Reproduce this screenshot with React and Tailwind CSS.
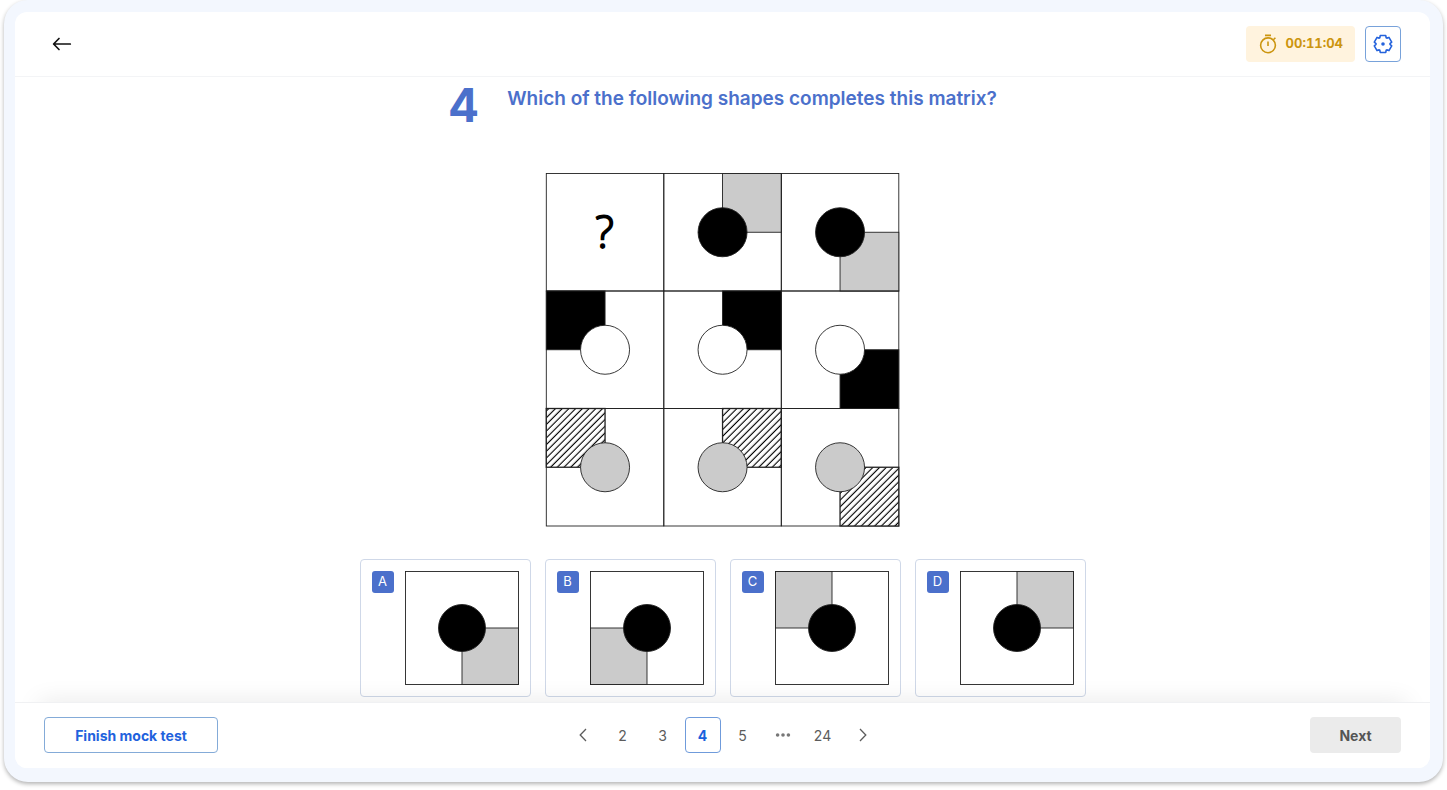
import React, { useState } from "react";

const FILLS = { black: "#000", grey: "#cbcbcb", white: "#fff", hatch: "url(#hatch)" };

const MATRIX = [
  [null, { corner: "tr", square: "grey", circle: "black" }, { corner: "br", square: "grey", circle: "black" }],
  [
    { corner: "tl", square: "black", circle: "white" },
    { corner: "tr", square: "black", circle: "white" },
    { corner: "br", square: "black", circle: "white" },
  ],
  [
    { corner: "tl", square: "hatch", circle: "grey" },
    { corner: "tr", square: "hatch", circle: "grey" },
    { corner: "br", square: "hatch", circle: "grey" },
  ],
];

const OPTIONS = [
  { label: "A", corner: "br" },
  { label: "B", corner: "bl" },
  { label: "C", corner: "tl" },
  { label: "D", corner: "tr" },
];

const CELL = 352.5 / 3;

function Cell({ x, y, size, radius, shape }) {
  const half = size / 2;
  const sx = shape && shape.corner[1] === "r" ? x + half : x;
  const sy = shape && shape.corner[0] === "b" ? y + half : y;
  return (
    <g stroke="#222" strokeWidth="0.9">
      <rect x={x} y={y} width={size} height={size} fill="none" />
      {shape && (
        <>
          <rect
            x={sx}
            y={sy}
            width={half}
            height={half}
            fill={FILLS[shape.square]}
            strokeWidth={shape.square === "hatch" ? 1.3 : 0.9}
          />
          <circle cx={x + half} cy={y + half} r={radius} fill={FILLS[shape.circle]} />
        </>
      )}
    </g>
  );
}

function Matrix() {
  return (
    <svg viewBox="0 0 353 353" className="block h-[353px] w-[353px] overflow-visible" role="img" aria-label="Three by three matrix of shapes">
      <defs>
        <pattern id="hatch" width="4.75" height="4.75" patternUnits="userSpaceOnUse" patternTransform="rotate(45)">
          <rect width="4.75" height="4.75" fill="#fff" />
          <line x1="2.3" y1="0" x2="2.3" y2="4.75" stroke="#000" strokeWidth="1.15" />
        </pattern>
      </defs>
      {MATRIX.map((row, r) =>
        row.map((shape, c) => (
          <Cell key={`${r}-${c}`} x={0.3 + c * CELL} y={0.5 + r * CELL} size={CELL} radius={24.5} shape={shape} />
        ))
      )}
      <text
        x="58.5"
        y="75"
        textAnchor="middle"
        fontSize="44"
        stroke="#000"
        strokeWidth="1.8"
        strokeLinejoin="round"
        className="font-['Open_Sans',sans-serif] font-light"
      >
        ?
      </text>
    </svg>
  );
}

function ArrowLeft() {
  return (
    <svg viewBox="0 0 20 16" className="h-4 w-5" fill="none" stroke="#111" strokeWidth="1.7" strokeLinecap="round" strokeLinejoin="round">
      <path d="M18.3 8H1.7M7 2.5 1.6 8 7 13.5" />
    </svg>
  );
}

function Stopwatch() {
  return (
    <svg viewBox="0 0 20 20" className="h-5 w-5" fill="none" stroke="currentColor" strokeWidth="1.6">
      <circle cx="10" cy="11.3" r="7.4" />
      <path d="M7 1.4h6M10 7.6v4.4M15.4 5.8l2-2" />
    </svg>
  );
}

function gearPath() {
  const points = [];
  for (let tooth = 0; tooth < 6; tooth++) {
    [[-27, 7], [-18, 8.9], [18, 8.9], [27, 7]].forEach(([offset, radius]) => {
      const angle = ((tooth * 60 - 90 + offset) * Math.PI) / 180;
      points.push(`${(10 + radius * Math.cos(angle)).toFixed(2)} ${(10 + radius * Math.sin(angle)).toFixed(2)}`);
    });
  }
  return `M${points.join("L")}Z`;
}

function Gear() {
  return (
    <svg viewBox="0 0 20 20" className="h-5 w-5" fill="none" stroke="currentColor" strokeWidth="1.6" strokeLinejoin="round">
      <path d={gearPath()} />
      <circle cx="10" cy="10" r="1.8" fill="currentColor" stroke="none" />
    </svg>
  );
}

function Chevron({ d }) {
  return (
    <svg viewBox="0 0 8 14" className="h-3.5 w-2" fill="none" stroke="currentColor" strokeWidth="1.3">
      <path d={d} />
    </svg>
  );
}

function PageButton({ active, children, ...rest }) {
  return (
    <button
      type="button"
      className={
        active
          ? "flex h-9 w-9 items-center justify-center rounded-[4px] border border-[#6f9bdb] bg-white font-bold text-[#1a62dc]"
          : "flex h-9 w-9 items-center justify-center rounded-[4px] text-[#5c5c5c]"
      }
      {...rest}
    >
      {children}
    </button>
  );
}

export default function App() {
  const [page, setPage] = useState(4);
  return (
    <div className="min-h-[790px] bg-white font-[Inter,sans-serif]">
      <div className="mx-1 rounded-[24px] bg-[#f3f7fe] pt-3 pr-[13px] pb-[14px] pl-[11px] shadow-[0_2px_4px_rgba(0,0,0,0.3)]">
        <div className="overflow-hidden rounded-[12px] bg-white">
          <header className="flex h-[65px] items-center justify-between border-b border-[#f3f4f6] px-[29px]">
            <button type="button" aria-label="Back" className="flex h-9 w-9 items-center justify-center">
              <ArrowLeft />
            </button>
            <div className="flex items-center gap-[10px]">
              <div className="flex h-9 items-center gap-2 rounded-[4px] bg-[#fff3de] px-3 text-[13px] font-bold text-[#cc950f] tabular-nums">
                <Stopwatch />
                <span>00:11:04</span>
              </div>
              <button
                type="button"
                aria-label="Settings"
                className="flex h-9 w-9 items-center justify-center rounded-[4px] border border-[#78a2da] text-[#2563dc]"
              >
                <Gear />
              </button>
            </div>
          </header>

          <main className="flex flex-col items-center">
            <div className="flex h-24 items-start gap-7 text-[#4b70cb]">
              <span className="pt-1 text-[46px] leading-[48px] font-bold">4</span>
              <h1 className="pt-2 text-[19px] leading-7 font-semibold">Which of the following shapes completes this matrix?</h1>
            </div>
            <Matrix />
            <div className="mt-[33px] mb-[5px] grid grid-cols-4 gap-[14px]">
              {OPTIONS.map(({ label, corner }) => (
                <button
                  key={label}
                  type="button"
                  aria-label={`Option ${label}`}
                  className="flex items-start gap-[11px] rounded-[4px] border border-[#cfd8e8] bg-white p-[11px]"
                >
                  <span className="flex h-[22px] w-[22px] items-center justify-center rounded-[3px] bg-[#4b70cb] text-[13px] text-white">
                    {label}
                  </span>
                  <svg viewBox="0 0 114 114" className="block h-[114px] w-[114px]">
                    <Cell x={0.5} y={0.5} size={113} radius={23.5} shape={{ corner, square: "grey", circle: "black" }} />
                  </svg>
                </button>
              ))}
            </div>
          </main>

          <footer className="relative z-10 grid h-[66px] grid-cols-[1fr_auto_1fr] items-start border-t border-[#f0f1f3] bg-white px-[29px] pt-[14px] text-[14px] shadow-[0_-24px_24px_-24px_rgba(0,0,0,0.1)]">
            <button
              type="button"
              className="h-9 w-[174px] justify-self-start rounded-[4px] border border-[#84abd8] font-bold text-[#1f62dd]"
            >
              Finish mock test
            </button>
            <nav aria-label="Questions" className="flex items-center gap-1">
              <PageButton aria-label="Previous question">
                <Chevron d="M7 1 1.2 7 7 13" />
              </PageButton>
              {[2, 3, 4, 5].map((n) => (
                <PageButton key={n} active={n === page} onClick={() => setPage(n)}>
                  {n}
                </PageButton>
              ))}
              <span className="flex h-9 w-9 items-center justify-center text-[#777]">
                <svg viewBox="0 0 16 4" className="h-1 w-4" fill="currentColor">
                  <circle cx="2.6" cy="2" r="1.8" />
                  <circle cx="8" cy="2" r="1.8" />
                  <circle cx="13.4" cy="2" r="1.8" />
                </svg>
              </span>
              <PageButton active={page === 24} onClick={() => setPage(24)}>
                24
              </PageButton>
              <PageButton aria-label="Next question">
                <Chevron d="M1 1 6.8 7 1 13" />
              </PageButton>
            </nav>
            <button type="button" className="h-9 w-[91px] justify-self-end rounded-[4px] bg-[#ebebeb] font-bold text-[#555]">
              Next
            </button>
          </footer>
        </div>
      </div>
    </div>
  );
}
